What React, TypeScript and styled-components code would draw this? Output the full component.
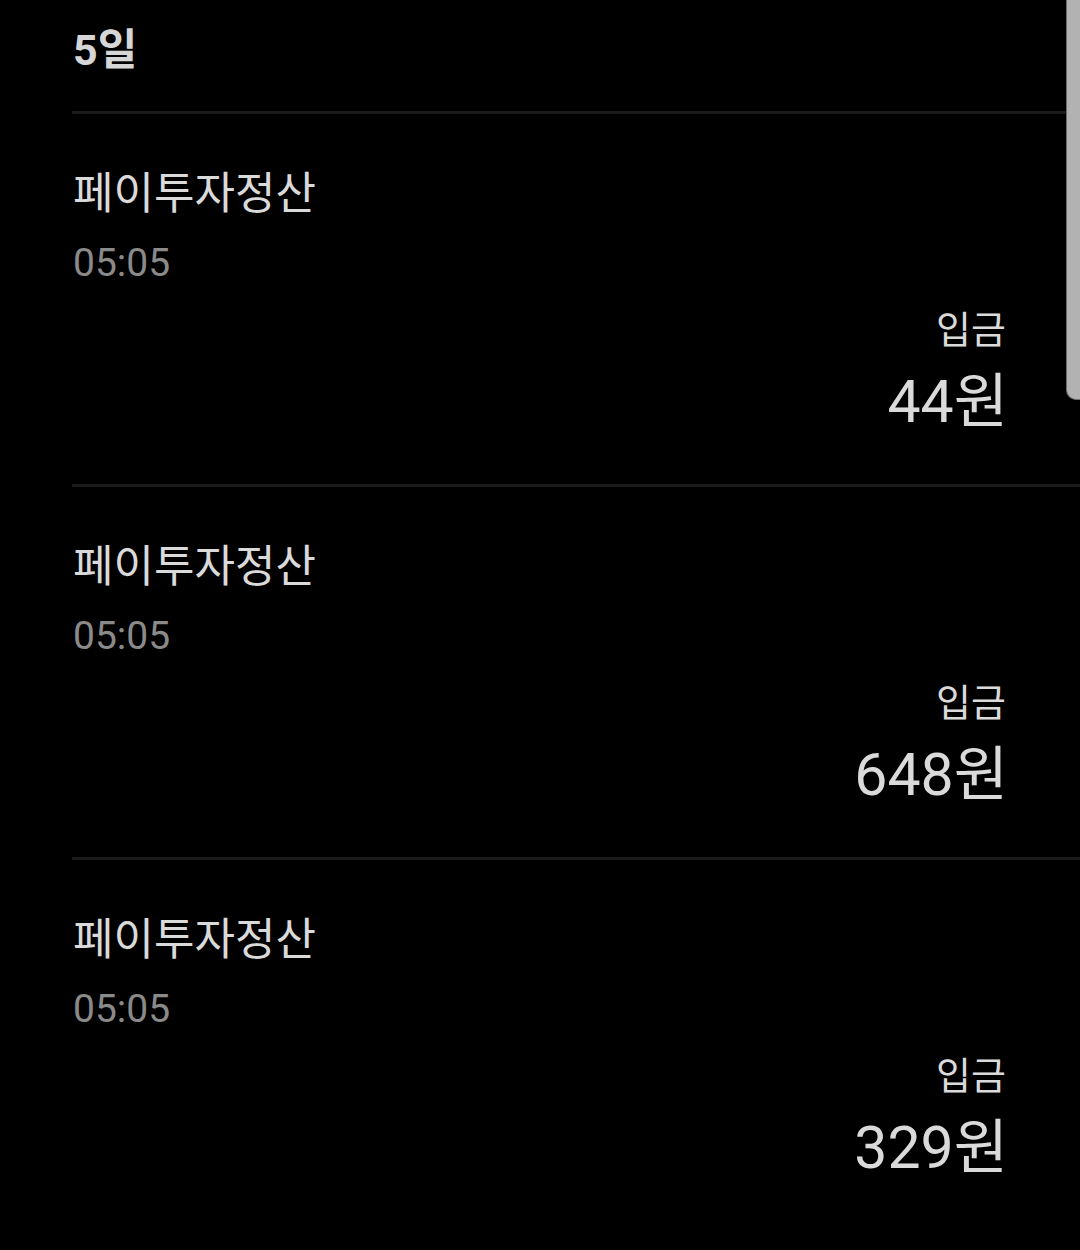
import styled, { createGlobalStyle } from 'styled-components';

const GlobalStyle = createGlobalStyle`
  html, body {
    margin: 0;
    padding: 0;
    background: #000;
  }
  body {
    font-family: Roboto, 'Noto Sans CJK KR', sans-serif;
  }
`;

const transactions = [
  { title: '페이투자정산', time: '05:05', type: '입금', amount: '44원' },
  { title: '페이투자정산', time: '05:05', type: '입금', amount: '648원' },
  { title: '페이투자정산', time: '05:05', type: '입금', amount: '329원' },
];

const App = () => {
  return (
    <>
      <GlobalStyle />
      <StPage>
        <StList>
          <StDayHeader>5일</StDayHeader>
          {transactions.map((item, idx) => (
            <StRow key={idx}>
              <StTitle>{item.title}</StTitle>
              <StTime>{item.time}</StTime>
              <StType>{item.type}</StType>
              <StAmount>{item.amount}</StAmount>
            </StRow>
          ))}
        </StList>
        <StScrollThumb />
      </StPage>
    </>
  );
};

const StPage = styled.div`
  position: relative;
  width: 1080px;
  height: 1250px;
  background: #000;
  overflow: hidden;
`;

const StList = styled.div`
  margin-left: 72px;
  display: flex;
  flex-direction: column;
`;

const StDayHeader = styled.div`
  height: 114px;
  box-sizing: border-box;
  padding-bottom: 19px;
  display: flex;
  align-items: center;
  padding-left: 1px;
  color: #d6d6d6;
  font-size: 43px;
  font-weight: bold;
  border-bottom: 3px solid #1a1a1a;
`;

const StRow = styled.div`
  display: flex;
  flex-direction: column;
  padding: 50px 72px 47px 1px;
  border-bottom: 3px solid #1a1a1a;

  &:last-child {
    border-bottom: none;
  }
`;

const StTitle = styled.div`
  height: 60px;
  line-height: 60px;
  font-size: 44px;
  color: #dadada;
`;

const StTime = styled.div`
  margin-top: 14px;
  height: 50px;
  line-height: 50px;
  font-size: 39px;
  color: #8a8a8a;
`;

const StType = styled.div`
  margin-top: 17px;
  height: 50px;
  line-height: 50px;
  font-size: 38px;
  color: #dadada;
  text-align: right;
  margin-right: 2px;
`;

const StAmount = styled.div`
  margin-top: 12px;
  height: 70px;
  line-height: 70px;
  font-size: 59px;
  color: #dadada;
  text-align: right;
`;

const StScrollThumb = styled.div`
  position: absolute;
  top: 0;
  right: 0;
  width: 13px;
  height: 399px;
  background: #b2b2b2;
  border-left: 1px solid #6c6c6c;
  border-bottom: 1px solid #6c6c6c;
  border-bottom-left-radius: 10px;
`;

export default App;
